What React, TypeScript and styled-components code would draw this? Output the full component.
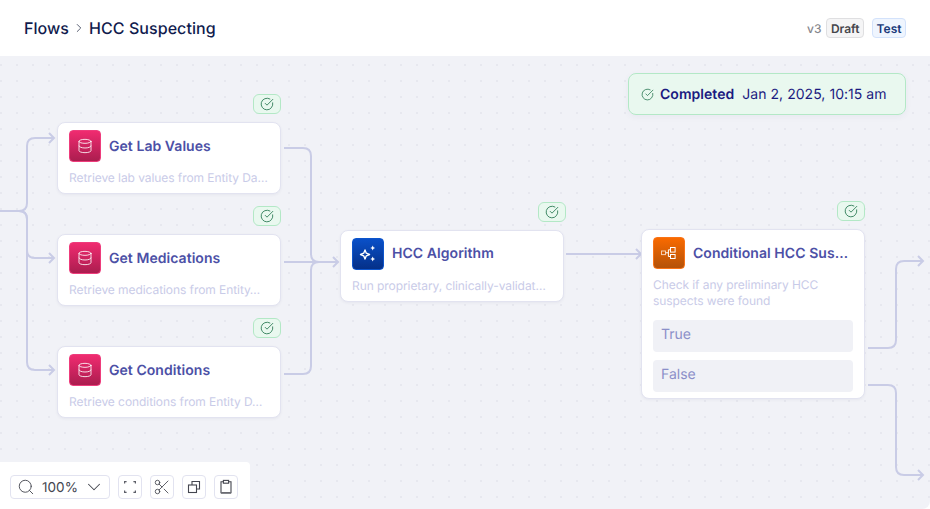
import React from "react";
import styled, { createGlobalStyle } from "styled-components";
import { ChevronDown, ChevronRight, CircleCheckBig, Database, Scissors, Search } from "lucide-react";

const Global = createGlobalStyle`
  html, body { margin: 0; padding: 0; background: #fff; }
  body { font-family: Inter, "Liberation Sans", sans-serif; text-rendering: geometricPrecision; }
  * { box-sizing: border-box; }
`;

const Page = styled.div`
  width: 930px;
  height: 509px;
  display: flex;
  flex-direction: column;
  overflow: hidden;
`;

const Header = styled.header`
  height: 56px;
  flex: none;
  display: flex;
  align-items: center;
  justify-content: space-between;
  padding: 0 24px;
  background: #fff;
`;

const Crumbs = styled.div`
  display: flex;
  align-items: center;
  gap: 3px;
  font-size: 16px;
  font-weight: 500;
  letter-spacing: 0.06px;
  color: #101b4d;
`;

const Meta = styled.div`
  display: flex;
  align-items: center;
  font-size: 12px;
  font-weight: 500;
  color: #85868c;
`;

const Badge = styled.span<{ $tone: "gray" | "blue" }>`
  height: 20px;
  padding: 0 3.5px;
  display: flex;
  align-items: center;
  border-radius: 4px;
  font-weight: 600;
  border: 1px solid ${(p) => (p.$tone === "gray" ? "#dfdfe1" : "#d3e2fb")};
  background: ${(p) => (p.$tone === "gray" ? "#f5f5f6" : "#eff5fe")};
  color: ${(p) => (p.$tone === "gray" ? "#45464b" : "#1a3a7a")};
  margin-left: ${(p) => (p.$tone === "gray" ? "5px" : "8px")};
`;

const Canvas = styled.main`
  position: relative;
  flex: 1;
  overflow: hidden;
  border-bottom-right-radius: 8px;
  background-color: #f1f2f7;
  background-image: radial-gradient(circle at 1px 1px, #e7e8ef 1px, transparent 1px);
  background-size: 16px 16px;
  background-position: 0 8px;
`;

const Edges = styled.svg`
  position: absolute;
  inset: 0;
`;

const Node = styled.section<{ $x: number; $y: number; $h: number }>`
  position: absolute;
  left: ${(p) => p.$x}px;
  top: ${(p) => p.$y}px;
  width: 224px;
  height: ${(p) => p.$h}px;
  padding: 7px 11px;
  background: #fff;
  border: 1px solid #e2e3f0;
  border-radius: 8px;
  box-shadow: 0 1px 3px rgba(50, 55, 110, 0.06);
`;

const NodeHead = styled.div`
  display: flex;
  align-items: center;
  gap: 8px;
  height: 32px;
`;

const NodeIcon = styled.div<{ $from: string; $to: string; $edge: string }>`
  width: 32px;
  height: 32px;
  flex: none;
  display: flex;
  align-items: center;
  justify-content: center;
  border-radius: 4px;
  border: 1px solid ${(p) => p.$edge};
  background: linear-gradient(180deg, ${(p) => p.$from}, ${(p) => p.$to});
  color: #fff;
`;

const NodeTitle = styled.h3<{ $drop?: number }>`
  margin: ${(p) => p.$drop ?? 0}px 0 0;
  font-size: 14px;
  line-height: 20px;
  font-weight: 600;
  letter-spacing: 0.05px;
  color: #4c50a6;
  white-space: nowrap;
  overflow: hidden;
  text-overflow: ellipsis;
`;

const NodeDesc = styled.p<{ $lines?: number }>`
  margin: 8px 0 0;
  font-size: 12px;
  line-height: 16px;
  letter-spacing: -0.07px;
  color: #c9cbe8;
  overflow: hidden;
  ${(p) => (p.$lines === 2 ? "" : "white-space: nowrap; text-overflow: ellipsis;")}
`;

const Branches = styled.div`
  margin-top: 11px;
  display: flex;
  flex-direction: column;
  gap: 8px;
`;

const Branch = styled.div`
  height: 32px;
  padding: 0 8px 4px;
  display: flex;
  align-items: center;
  border-radius: 4px;
  background: #f0f1f6;
  font-size: 14px;
  color: #8b8fc9;
`;

const Chip = styled.div<{ $shift?: number }>`
  position: absolute;
  top: -29px;
  right: ${(p) => -1 - (p.$shift ?? 0)}px;
  width: 28px;
  height: 20px;
  display: flex;
  align-items: center;
  justify-content: center;
  border-radius: 6px;
  border: 1px solid #b3e8c6;
  background: #e9f8ef;
  color: #2c7a55;
`;

const Completed = styled.div`
  position: absolute;
  left: 628px;
  top: 17px;
  width: 278px;
  height: 42px;
  padding-left: 12px;
  display: flex;
  align-items: center;
  gap: 6px;
  border-radius: 8px;
  border: 1px solid #b3e8c6;
  background: #e9f8ef;
  box-shadow: 0 2px 6px rgba(50, 55, 110, 0.05);
  font-size: 14px;
  letter-spacing: 0.04px;
  color: #1a1a80;
  white-space: nowrap;
  svg { color: #2c7a55; }
`;

const CompletedLabel = styled.strong`
  font-weight: 600;
  margin-right: 2px;
`;

const Toolbar = styled.div`
  position: absolute;
  left: 0;
  bottom: 0;
  width: 250px;
  height: 47px;
  padding: 13px 0 0 10px;
  display: flex;
  align-items: flex-start;
  gap: 8px;
  background: #fff;
  border-top-right-radius: 4px;
`;

const ZoomSelect = styled.div`
  width: 100px;
  height: 24px;
  padding: 0 4px 0 6px;
  display: flex;
  align-items: center;
  justify-content: space-between;
  border: 1px solid #e2e3f0;
  border-radius: 4px;
  font-size: 13.5px;
  color: #44464f;
  svg { color: #44464f; }
`;

const ZoomValue = styled.span`
  margin: 1px 0 0 2px;
`;

const ToolButton = styled.button`
  width: 24px;
  height: 24px;
  padding: 0;
  display: flex;
  align-items: center;
  justify-content: center;
  border: 1px solid #e2e3f0;
  border-radius: 4px;
  background: #fff;
  color: #44464f;
`;

const StatusCheck = () => <CircleCheckBig size={14} strokeWidth={1.5} />;

const Sparkle = () => (
  <svg width="18" height="18" viewBox="0 0 18 18" fill="currentColor">
    <path d="M6 5 7.3 8.2 10.5 9.5 7.3 10.8 6 14 4.7 10.8 1.5 9.5 4.7 8.2Z" fill="none" stroke="currentColor" strokeWidth="1.4" strokeLinejoin="round" />
    <path d="M13.7 0.6 14.5 2.2 16.1 3 14.5 3.8 13.7 5.4 12.9 3.8 11.3 3 12.9 2.2Z" />
    <path d="M13.7 11.6 14.5 13.2 16.1 14 14.5 14.8 13.7 16.4 12.9 14.8 11.3 14 12.9 13.2Z" />
  </svg>
);

const FlowIcon = () => (
  <svg width="16" height="16" viewBox="0 0 16 16" fill="none" stroke="currentColor" strokeWidth="1">
    <rect x="0.5" y="6" width="4" height="3.6" opacity="0.7" />
    <rect x="9.5" y="2.5" width="4.6" height="4.6" />
    <rect x="9.5" y="9.5" width="4.6" height="4" />
    <path d="M4.5 7.8H7.4M7.4 4.8V11.5M7.4 4.8H9.5M7.4 11.5H9.5" />
  </svg>
);

const FitIcon = () => (
  <svg width="16" height="16" viewBox="0 0 16 16" fill="none" stroke="#5d5f68" strokeWidth="1.2">
    <path d="M2.6 4.6V2.6H4.6M11.4 2.6H13.4V4.6M13.4 11.4V13.4H11.4M4.6 13.4H2.6V11.4" />
  </svg>
);

const CopyIcon = () => (
  <svg width="16" height="16" viewBox="0 0 16 16" fill="none" stroke="currentColor" strokeWidth="1.1">
    <rect x="2.5" y="6" width="8" height="7.5" />
    <path d="M6 6V2.5H13.5V10H10.5" />
  </svg>
);

const ClipboardIcon = () => (
  <svg width="16" height="16" viewBox="0 0 16 16" fill="none" stroke="currentColor" strokeWidth="1.1">
    <path d="M5.4 2.8H3V13.6H13V2.8H10.6" />
    <rect x="5.4" y="1.4" width="5.2" height="2.8" />
    <path d="M3 14.2H13" stroke="#85868c" strokeWidth="1.6" />
  </svg>
);

const Arrow = ({ x, y }: { x: number; y: number }) => <path d={`M${x - 5} ${y - 5}L${x} ${y}L${x - 5} ${y + 5}`} />;

const dbIcon = { $from: "#f02b70", $to: "#ab1d4f", $edge: "#ee3c7c" };

const dataNodes = [
  { title: "Get Lab Values", desc: "Retrieve lab values from Entity Da…", y: 66 },
  { title: "Get Medications", desc: "Retrieve medications from Entity…", y: 178 },
  { title: "Get Conditions", desc: "Retrieve conditions from Entity D…", y: 290 },
];

export default function App() {
  return (
    <Page>
      <Global />
      <Header>
        <Crumbs>
          <span>Flows</span>
          <ChevronRight size={14} color="#444a60" strokeWidth={1.5} />
          <span>HCC Suspecting</span>
        </Crumbs>
        <Meta>
          <span>v3</span>
          <Badge $tone="gray">Draft</Badge>
          <Badge $tone="blue">Test</Badge>
        </Meta>
      </Header>
      <Canvas>
        <Edges width="930" height="453" viewBox="0 0 930 453" fill="none" stroke="#c9cce6" strokeWidth="2">
          <path d="M0 155H19Q27 155 27 147V90Q27 82 35 82H53" />
          <path d="M0 155H19Q27 155 27 163V194Q27 202 35 202H53" />
          <path d="M19 155Q27 155 27 163V306Q27 314 35 314H53" />
          <Arrow x={54} y={82} />
          <Arrow x={54} y={202} />
          <Arrow x={54} y={314} />
          <path d="M284 92H303Q311 92 311 100V198Q311 206 319 206H337" />
          <path d="M284 206H337" />
          <path d="M284 318H303Q311 318 311 310V214Q311 206 319 206" />
          <Arrow x={338} y={206} />
          <path d="M566 198H640" />
          <Arrow x={641} y={198} />
          <path d="M868 292H888Q896 292 896 284V213Q896 205 904 205H922" />
          <Arrow x={923} y={205} />
          <path d="M868 329H888Q896 329 896 337V411Q896 419 904 419H922" />
          <Arrow x={923} y={419} />
        </Edges>

        {dataNodes.map((n) => (
          <Node key={n.title} $x={57} $y={n.y} $h={72}>
            <Chip><StatusCheck /></Chip>
            <NodeHead>
              <NodeIcon {...dbIcon}><Database size={16} strokeWidth={1.25} /></NodeIcon>
              <NodeTitle $drop={1}>{n.title}</NodeTitle>
            </NodeHead>
            <NodeDesc>{n.desc}</NodeDesc>
          </Node>
        ))}

        <Node $x={340} $y={174} $h={72}>
          <Chip $shift={2}><StatusCheck /></Chip>
          <NodeHead>
            <NodeIcon $from="#0a50c8" $to="#053088" $edge="#0d55cc"><Sparkle /></NodeIcon>
            <NodeTitle>HCC Algorithm</NodeTitle>
          </NodeHead>
          <NodeDesc>Run proprietary, clinically-validat…</NodeDesc>
        </Node>

        <Node $x={641} $y={173} $h={170}>
          <Chip><StatusCheck /></Chip>
          <NodeHead>
            <NodeIcon $from="#f96a00" $to="#b45209" $edge="#f97316"><FlowIcon /></NodeIcon>
            <NodeTitle $drop={1}>Conditional HCC Sus…</NodeTitle>
          </NodeHead>
          <NodeDesc $lines={2}>Check if any preliminary HCC suspects were found</NodeDesc>
          <Branches>
            <Branch>True</Branch>
            <Branch>False</Branch>
          </Branches>
        </Node>

        <Completed>
          <CircleCheckBig size={13} strokeWidth={1.5} />
          <CompletedLabel>Completed</CompletedLabel>
          <span>Jan 2, 2025, 10:15 am</span>
        </Completed>

        <Toolbar>
          <ZoomSelect>
            <Search size={18} strokeWidth={1.2} />
            <ZoomValue>100%</ZoomValue>
            <ChevronDown size={22} strokeWidth={1.1} />
          </ZoomSelect>
          <ToolButton><FitIcon /></ToolButton>
          <ToolButton><Scissors size={18} strokeWidth={1.15} /></ToolButton>
          <ToolButton><CopyIcon /></ToolButton>
          <ToolButton><ClipboardIcon /></ToolButton>
        </Toolbar>
      </Canvas>
    </Page>
  );
}
